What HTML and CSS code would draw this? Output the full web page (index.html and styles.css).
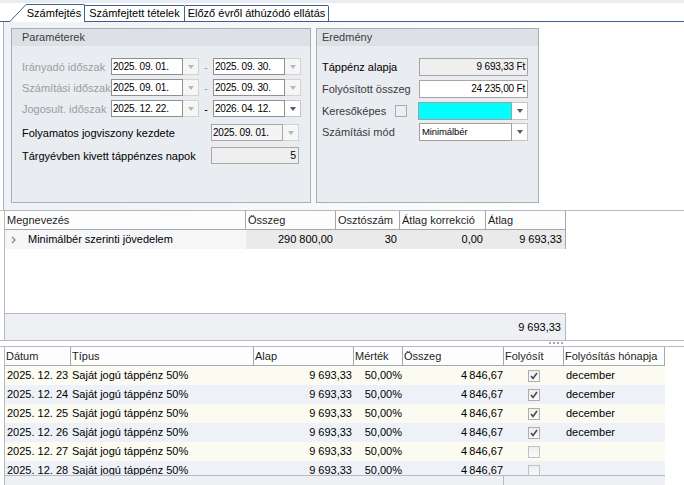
FILE: index.html
```html
<!DOCTYPE html>
<html lang="hu">
<head>
<meta charset="utf-8">
<title>Számfejtés</title>
<link rel="stylesheet" href="styles.css">
</head>
<body>
<div class="band"></div>
<div class="tabstrip">
  <div class="tab-lead"></div>
  <svg class="tab-slant" width="16" height="19" viewBox="0 0 16 19"><polygon points="0,19 16,1 16,19" fill="#fff"/><line x1="0" y1="18.5" x2="16" y2="1.5" stroke="#3f5f8f" stroke-width="1"/></svg>
  <div class="tab tab-active">Számfejtés</div>
  <div class="tab tab-2">Számfejtett tételek</div>
  <div class="tab tab-3">Előző évről áthúzódó ellátás</div>
  <div class="tab-fill"></div>
</div>

<div class="page">
  <section class="group params">
    <div class="group-head">Paraméterek</div>
    <div class="group-body pbody">
      <div class="prow">
        <span class="plabel dis">Irányadó időszak</span>
        <div class="combo"><span class="cb-text">2025. 09. 01.</span><span class="cb-btn"><i class="tri"></i></span></div>
        <span class="dash dis">-</span>
        <div class="combo"><span class="cb-text">2025. 09. 30.</span><span class="cb-btn"><i class="tri"></i></span></div>
      </div>
      <div class="prow r2">
        <span class="plabel dis">Számítási időszak</span>
        <div class="combo"><span class="cb-text">2025. 09. 01.</span><span class="cb-btn"><i class="tri"></i></span></div>
        <span class="dash dis">-</span>
        <div class="combo"><span class="cb-text">2025. 09. 30.</span><span class="cb-btn"><i class="tri"></i></span></div>
      </div>
      <div class="prow r3">
        <span class="plabel dis">Jogosult. időszak</span>
        <div class="combo"><span class="cb-text">2025. 12. 22.</span><span class="cb-btn"><i class="tri"></i></span></div>
        <span class="dash">-</span>
        <div class="combo"><span class="cb-text">2026. 04. 12.</span><span class="cb-btn on"><i class="tri"></i></span></div>
      </div>
      <div class="prow r4">
        <span class="plabel wide">Folyamatos jogviszony kezdete</span>
        <div class="combo"><span class="cb-text ro">2025. 09. 01.</span><span class="cb-btn"><i class="tri"></i></span></div>
      </div>
      <div class="prow r5">
        <span class="plabel wide">Tárgyévben kivett táppénzes napok</span>
        <span class="numbox">5</span>
      </div>
    </div>
  </section>

  <section class="group result">
    <div class="group-head">Eredmény</div>
    <div class="group-body rbody">
      <div class="rrow">
        <span class="rlabel strong">Táppénz alapja</span>
        <span class="rin ro">9 693,33 Ft</span>
      </div>
      <div class="rrow q2">
        <span class="rlabel">Folyósított összeg</span>
        <span class="rin">24 235,00 Ft</span>
      </div>
      <div class="rrow q3">
        <span class="rlabel short">Keresőképes</span>
        <span class="cbox"></span>
        <div class="combo rcombo cyan"><span class="cb-text"></span><span class="cb-btn on"><i class="tri"></i></span></div>
      </div>
      <div class="rrow q4">
        <span class="rlabel">Számítási mód</span>
        <div class="combo rcombo wcombo"><span class="cb-text small">Minimálbér</span><span class="cb-btn on"><i class="tri"></i></span></div>
      </div>
    </div>
  </section>
</div>

<div class="grid1">
  <div class="g1-inner">
    <div class="g1-head">
      <div class="hc c1">Megnevezés</div>
      <div class="hc c2">Összeg</div>
      <div class="hc c3">Osztószám</div>
      <div class="hc c4">Átlag korrekció</div>
      <div class="hc c5">Átlag</div>
    </div>
    <div class="g1-row">
      <div class="dc c1 first"><svg class="chev" width="6" height="8" viewBox="0 0 6 8"><polyline points="1,1 4,4 1,7" fill="none" stroke="#8a8a8a" stroke-width="1.4"/></svg>Minimálbér szerinti jövedelem</div>
      <div class="dc c2 num">290 800,00</div>
      <div class="dc c3 num">30</div>
      <div class="dc c4 num">0,00</div>
      <div class="dc c5 num last">9 693,33</div>
    </div>
    <div class="g1-empty"></div>
    <div class="g1-foot">9 693,33</div>
  </div>
</div>

<div class="splitter">
  <svg width="15" height="2" viewBox="0 0 15 2"><rect x="0" y="0" width="2" height="2" fill="#a3a9b1"/><rect x="4" y="0" width="2" height="2" fill="#a3a9b1"/><rect x="8" y="0" width="2" height="2" fill="#a3a9b1"/><rect x="12" y="0" width="2" height="2" fill="#a3a9b1"/></svg>
</div>

<div class="grid2">
  <div class="g2-inner">
    <div class="g2-head">
      <div class="hc d1">Dátum</div>
      <div class="hc d2">Típus</div>
      <div class="hc d3">Alap</div>
      <div class="hc d4">Mérték</div>
      <div class="hc d5">Összeg</div>
      <div class="hc d6">Folyósít</div>
      <div class="hc d7">Folyósítás hónapja</div>
    </div>
    <div class="g2-rows">
      <div class="g2-row odd">
        <div class="rc d1">2025. 12. 23</div><div class="rc d2">Saját jogú táppénz 50%</div><div class="rc d3 num">9 693,33</div><div class="rc d4 num">50,00%</div><div class="rc d5 num">4&#8201;846,67</div><div class="rc d6 ctr"><span class="chk on"><svg width="10" height="10" viewBox="0 0 10 10"><polyline points="2,5 4,7.5 8,2" fill="none" stroke="#4a4a4a" stroke-width="1.6"/></svg></span></div><div class="rc d7">december</div>
      </div>
      <div class="g2-row even">
        <div class="rc d1">2025. 12. 24</div><div class="rc d2">Saját jogú táppénz 50%</div><div class="rc d3 num">9 693,33</div><div class="rc d4 num">50,00%</div><div class="rc d5 num">4&#8201;846,67</div><div class="rc d6 ctr"><span class="chk on"><svg width="10" height="10" viewBox="0 0 10 10"><polyline points="2,5 4,7.5 8,2" fill="none" stroke="#4a4a4a" stroke-width="1.6"/></svg></span></div><div class="rc d7">december</div>
      </div>
      <div class="g2-row odd">
        <div class="rc d1">2025. 12. 25</div><div class="rc d2">Saját jogú táppénz 50%</div><div class="rc d3 num">9 693,33</div><div class="rc d4 num">50,00%</div><div class="rc d5 num">4&#8201;846,67</div><div class="rc d6 ctr"><span class="chk on"><svg width="10" height="10" viewBox="0 0 10 10"><polyline points="2,5 4,7.5 8,2" fill="none" stroke="#4a4a4a" stroke-width="1.6"/></svg></span></div><div class="rc d7">december</div>
      </div>
      <div class="g2-row even">
        <div class="rc d1">2025. 12. 26</div><div class="rc d2">Saját jogú táppénz 50%</div><div class="rc d3 num">9 693,33</div><div class="rc d4 num">50,00%</div><div class="rc d5 num">4&#8201;846,67</div><div class="rc d6 ctr"><span class="chk on"><svg width="10" height="10" viewBox="0 0 10 10"><polyline points="2,5 4,7.5 8,2" fill="none" stroke="#4a4a4a" stroke-width="1.6"/></svg></span></div><div class="rc d7">december</div>
      </div>
      <div class="g2-row odd">
        <div class="rc d1">2025. 12. 27</div><div class="rc d2">Saját jogú táppénz 50%</div><div class="rc d3 num">9 693,33</div><div class="rc d4 num">50,00%</div><div class="rc d5 num">4&#8201;846,67</div><div class="rc d6 ctr"><span class="chk"></span></div><div class="rc d7"></div>
      </div>
      <div class="g2-row even">
        <div class="rc d1">2025. 12. 28</div><div class="rc d2">Saját jogú táppénz 50%</div><div class="rc d3 num">9 693,33</div><div class="rc d4 num">50,00%</div><div class="rc d5 num">4&#8201;846,67</div><div class="rc d6 ctr"><span class="chk"></span></div><div class="rc d7"></div>
      </div>
    </div>
    <div class="g2-foot"><div class="gf-cell"></div></div>
  </div>
</div>
</body>
</html>
```

FILE: styles.css
```css
html, body {
  margin: 0;
  padding: 0;
}
body {
  width: 684px;
  height: 485px;
  overflow: hidden;
  background: #fff;
  font-family: "Liberation Sans", Arial, sans-serif;
  font-size: 11px;
  color: #000;
}

/* top band + tabs */
.band {
  height: 3px;
  background: #e9ecf0;
}
.tabstrip {
  display: flex;
  align-items: flex-end;
  height: 19px;
}
.tab-lead {
  width: 10px;
  height: 19px;
  border-bottom: 1px solid #3f5f8f;
  box-sizing: border-box;
}
.tab-fill {
  flex: 1;
  height: 19px;
  border-bottom: 1px solid #3f5f8f;
  box-sizing: border-box;
}
.tab-slant {
  display: block;
  flex: none;
}
.tab {
  box-sizing: border-box;
  background: #fff;
  color: #000;
  text-align: center;
  white-space: nowrap;
  border-top: 1px solid #3f5f8f;
  border-right: 1px solid #3f5f8f;
  border-top-right-radius: 2px;
}
.tab-active {
  width: 59px;
  height: 18px;
  line-height: 17px;
  padding-right: 2px;
}
.tab-2, .tab-3 {
  height: 17px;
  line-height: 15px;
  border-bottom: 1px solid #3f5f8f;
}
.tab-2 { width: 100px; }
.tab-3 { width: 144px; }

/* tab page */
.page {
  height: 188px;
  margin-left: 3px;
  border-left: 1px solid #a9b1bc;
  box-sizing: border-box;
  padding: 6px 0 0 7px;
  display: flex;
  align-items: flex-start;
  gap: 5px;
  background: linear-gradient(to right, #eef1f5 0, #f7f8fa 45%, #fff 80%);
}
.group {
  height: 175px;
  box-sizing: border-box;
  border: 1px solid #a9aeb5;
  background: #e9ecf0;
}
.params { width: 300px; }
.result { width: 223px; }
.group-head {
  height: 17px;
  line-height: 17px;
  background: #dde1e6;
  color: #3c3c3c;
}
.params .group-head { padding-left: 10px; }
.result .group-head { padding-left: 5px; }
.group-body { padding-top: 12px; }
.pbody { padding-left: 10px; }
.rbody { padding-left: 5px; }

.prow {
  display: flex;
  align-items: center;
  height: 17px;
}
.r2, .r3 { margin-top: 4px; }
.r4 { margin-top: 7px; }
.r5 { margin-top: 6px; }
.plabel {
  width: 89px;
  flex: none;
  white-space: nowrap;
}
.plabel.wide { width: 189px; }
.dis { color: #9d9d9d; }
.dash {
  width: 14px;
  text-align: center;
  flex: none;
}

.combo {
  display: flex;
  width: 88px;
  height: 17px;
  flex: none;
}
.cb-text {
  flex: 1;
  box-sizing: border-box;
  border: 1px solid #909090;
  background: #fff;
  font-size: 10px;
  letter-spacing: -0.2px;
  line-height: 15px;
  padding-left: 1px;
  white-space: nowrap;
  overflow: hidden;
}
.cb-text.ro { background: #f4f4f4; border-color: #a8a8a8; }
.cb-text.small { font-size: 9.5px; letter-spacing: -0.1px; padding-left: 2px; }
.cb-btn {
  width: 16px;
  box-sizing: border-box;
  border: 1px solid #d2d2d2;
  border-left: 0;
  background: #f6f6f6;
  display: flex;
  align-items: center;
  justify-content: center;
}
.cb-btn.on { background: #fff; border-color: #c6c6c6; }
.tri {
  display: block;
  width: 0;
  height: 0;
  border-left: 3.5px solid transparent;
  border-right: 3.5px solid transparent;
  border-top: 4px solid #b8b8b8;
}
.cb-btn.on .tri { border-top-color: #5a5a5a; }

.numbox {
  width: 88px;
  height: 17px;
  box-sizing: border-box;
  border: 1px solid #a8a8a8;
  background: #efefef;
  text-align: right;
  padding-right: 2px;
  line-height: 15px;
  font-size: 10.5px;
}

.rrow {
  display: flex;
  align-items: center;
  height: 18px;
}
.q2, .q3 { margin-top: 4px; }
.q4 { margin-top: 3px; }
.rlabel {
  width: 97px;
  flex: none;
  white-space: nowrap;
  color: #3a3a3a;
}
.rlabel.strong { color: #000; }
.rlabel.short { width: 73px; }
.rin {
  width: 109px;
  height: 18px;
  box-sizing: border-box;
  border: 1px solid #a6a6a6;
  background: #fff;
  text-align: right;
  padding-right: 2px;
  line-height: 16px;
  font-size: 10px;
  letter-spacing: -0.2px;
  white-space: nowrap;
}
.rin.ro { background: #efefef; }
.cbox {
  width: 12px;
  height: 12px;
  box-sizing: border-box;
  border: 1px solid #ababab;
  background: #efefef;
  margin-right: 11px;
  flex: none;
}
.rcombo { width: 110px; height: 18px; }
.rcombo .cb-text { border-color: #a0a0a0; line-height: 16px; }
.cyan .cb-text { background: #00ffff; }
.wcombo { width: 109px; }

/* upper grid */
.grid1 {
  border-top: 1px solid #b5bac1;
  border-bottom: 1px solid #b5bac1;
}
.g1-inner {
  margin-left: 4px;
  border-left: 1px solid #b5bac1;
  height: 129px;
  display: flex;
  flex-direction: column;
}
.g1-head, .g1-row {
  display: flex;
  height: 19px;
}
.hc {
  box-sizing: border-box;
  height: 100%;
  border-right: 1px solid #a5a9ae;
  border-bottom: 1px solid #a5a9ae;
  background: #fdfdfd;
  color: #1e1e1e;
  padding-left: 2px;
  white-space: nowrap;
  overflow: hidden;
}
.g1-head .hc { line-height: 18px; }
.c1 { width: 241px; }
.c2 { width: 90px; }
.c3 { width: 64px; }
.c4 { width: 86px; }
.c5 { width: 80px; }
.dc {
  box-sizing: border-box;
  height: 19px;
  line-height: 19px;
  background: #eaeaea;
  white-space: nowrap;
}
.dc.first {
  background: #f5f6f8;
  display: flex;
  align-items: center;
  padding-left: 6px;
}
.chev { margin-right: 11px; flex: none; }
.dc.num { text-align: right; padding-right: 3px; }
.dc.last { border-right: 1px solid #a5a9ae; }
.g1-empty { flex: 1; }
.g1-foot {
  height: 27px;
  width: 561px;
  box-sizing: border-box;
  border-top: 1px solid #b5bac1;
  border-right: 1px solid #b5bac1;
  background: #eef0f3;
  text-align: right;
  padding-right: 4px;
  line-height: 26px;
}

/* splitter */
.splitter {
  height: 5px;
  box-sizing: border-box;
  padding: 1px 0 0 549px;
}
.splitter svg { display: block; }

/* lower grid */
.grid2 {
  border-top: 1px solid #b5bac1;
}
.g2-inner {
  margin-left: 4px;
  border-left: 1px solid #b5bac1;
  height: 138px;
  display: flex;
  flex-direction: column;
}
.g2-head {
  display: flex;
  height: 19px;
  flex: none;
}
.g2-head .hc { line-height: 18px; padding-left: 1px; }
.d1 { width: 66px; }
.d2 { width: 183px; }
.d3 { width: 100px; }
.d4 { width: 49px; }
.d5 { width: 101px; }
.d6 { width: 60px; }
.d7 { width: 101px; }
.g2-rows {
  height: 109px;
  width: 660px;
  overflow: hidden;
  flex: none;
}
.g2-row {
  display: flex;
  height: 19px;
  line-height: 19px;
}
.g2-row.odd { background: #fbfbf2; }
.g2-row.even { background: #eef2f8; }
.rc {
  box-sizing: border-box;
  padding-left: 1px;
  white-space: nowrap;
  overflow: hidden;
}
.rc.d1 { padding-left: 2px; }
.rc.d7 { padding-left: 2px; }
.rc.num { text-align: right; padding-right: 1px; }
.rc.d3 { padding-right: 2px; }
.rc.ctr {
  display: flex;
  align-items: center;
  justify-content: center;
  padding-left: 0;
}
.chk {
  width: 12px;
  height: 12px;
  box-sizing: border-box;
  border: 1px solid #c2c2c2;
  background: linear-gradient(#eeeeee, #fafafa);
  display: flex;
  align-items: center;
  justify-content: center;
}
.chk.on { border-color: #adadad; }
.chk svg { display: block; }
.g2-foot {
  flex: 1;
  width: 660px;
  box-sizing: border-box;
  border-top: 1px solid #b5bac1;
  background: #eef0f3;
}
.gf-cell {
  width: 499px;
  height: 100%;
  box-sizing: border-box;
  border-right: 1px solid #b5bac1;
}
```
